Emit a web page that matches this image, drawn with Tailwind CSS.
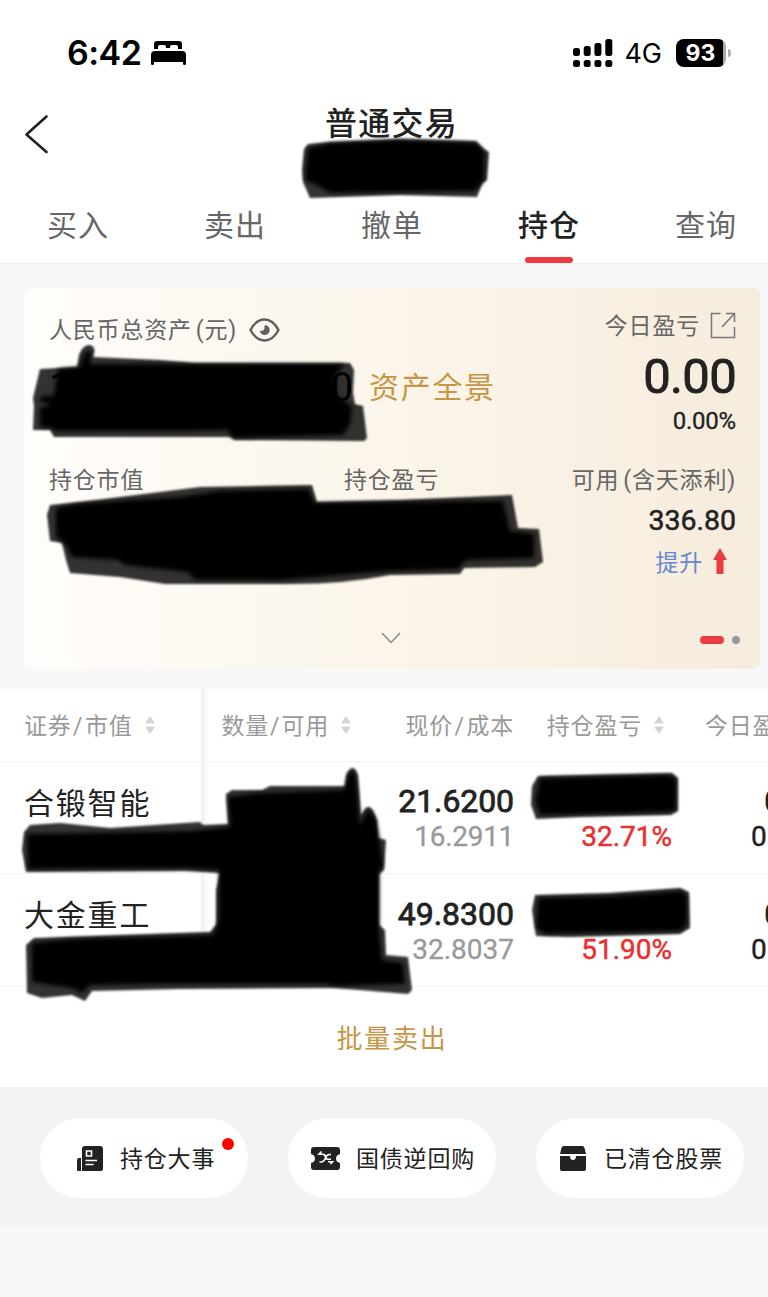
<!DOCTYPE html>
<html lang="zh-CN">
<head>
  <meta charset="UTF-8">
  <meta name="viewport" content="width=device-width, initial-scale=1.0">
  <title>普通交易</title>
  <script src="https://cdn.jsdelivr.net/npm/@tailwindcss/browser@4"></script>
</head>
<body class="bg-[#f8f8f8]">
  <div class="relative w-[768px] h-[1297px] overflow-hidden bg-[#f8f8f8] text-[#222] font-['Roboto','Noto_Sans_CJK_SC',sans-serif] whitespace-nowrap">

    <!-- Status bar -->
    <div class="h-24 bg-white flex items-center justify-between pt-[9px] pl-[67px] pr-[37px] text-black font-['Inter',sans-serif]">
      <div class="flex items-center gap-[10px]">
        <span class="text-[34px] leading-10 tracking-[-0.500px] font-semibold">6:42</span>
        <svg class="w-[35px] h-6" viewBox="0 0 35 24">
          <path d="M3 8V3q0-3 3-3h22q3 0 3 3v5h-4V6q0-2-2-2h-4q-2 0-2 2v1h-4V6q0-2-2-2H9Q7 4 7 6v2z"/>
          <path d="M0 14q0-4 4-4h27q4 0 4 4v9q0 1-1.500 1T32 23v-2H3v2q0 1-1.500 1T0 23z"/>
        </svg>
      </div>
      <div class="flex items-center">
        <svg class="w-10 h-7" viewBox="0 0 40 28">
          <rect x="0" y="9" width="7" height="8" rx="2.500"/><rect x="0" y="21" width="7" height="7" rx="2.500"/>
          <rect x="10.700" y="7" width="7" height="10" rx="2.500"/><rect x="10.700" y="21" width="7" height="7" rx="2.500"/>
          <rect x="21.400" y="4" width="7" height="13" rx="2.500"/><rect x="21.400" y="21" width="7" height="7" rx="2.500"/>
          <rect x="32.300" y="0" width="7" height="17" rx="2.500"/><rect x="32.300" y="21" width="7" height="7" rx="2.500"/>
        </svg>
        <span class="ml-[11px] mr-[2px] pt-[2px] text-[27px] leading-8">4G</span>
        <div class="ml-3 w-[50px] h-7 rounded-[8px] bg-linear-to-r from-black from-95% to-[#aaa] to-95% flex items-center justify-center pr-px pt-px text-white text-[23px] font-bold">93</div>
        <div class="ml-[2px] w-[3px] h-2 rounded-r-full bg-[#b0b0b0]"></div>
      </div>
    </div>

    <!-- Title -->
    <div class="h-[94px] bg-white grid grid-cols-[1fr_auto_1fr] items-start">
      <svg class="w-6 h-10 ml-[25px] mt-[18px]" viewBox="0 0 24 40" fill="none" stroke="#222" stroke-width="2.600" stroke-linecap="round" stroke-linejoin="round"><path d="M21.500 2.500L1.500 20.500l20 17.500"/></svg>
      <h1 class="mt-[6px] pl-[15px] text-[32px] leading-[44px] tracking-[1.300px] font-medium">普通交易</h1>
    </div>

    <!-- Tabs -->
    <div class="h-[74px] bg-white border-b border-[#eee] flex justify-between pl-[47px] pr-[31px] text-[30px] leading-[44px] tracking-[1px] text-[#666]">
      <div class="pt-[14px]">买入</div>
      <div class="pt-[14px]">卖出</div>
      <div class="pt-[14px]">撤单</div>
      <div class="pt-[14px] flex flex-col items-center justify-between font-medium text-[#222]">持仓<span class="w-12 h-[6px] rounded-full bg-[#e93b40]"></span></div>
      <div class="pt-[14px]">查询</div>
    </div>

    <!-- Assets card -->
    <div class="mt-[24px] ml-6 mr-2 h-[381px] rounded-[8px] bg-linear-to-r from-[#fffdfb] via-[#fbf5ea] to-[#f6ecdc] pl-[25px] pr-6 text-[23px] tracking-[0.8px] text-[#666]">
      <div class="flex justify-between h-[177px]">
        <div>
          <div class="flex items-center pt-[27px] leading-8">
            人民币总资产<span class="ml-1">(元)</span>
            <svg class="ml-[12px] -mt-[3px] w-[31px] h-6" viewBox="0 0 31 24" fill="none" stroke="#5f5f5f" stroke-width="2.400"><path d="M1.500 12Q7 1.500 15.500 1.500T29.500 12Q24 22.500 15.500 22.500T1.500 12z"/><path fill="#5f5f5f" stroke="none" d="M16 7a5 5 0 1 1-5.300 5.500 3.200 3.200 0 0 0 4.700-3.700z"/></svg>
          </div>
          <div class="flex items-center mt-5 leading-[42px]">
            <span class="w-[305px] flex justify-between text-[40px] text-black"><span>1</span><span>0</span></span>
            <span class="ml-[15px] text-[30px] tracking-[1.700px] text-[#c69545]">资产全景</span>
          </div>
        </div>
        <div class="flex flex-col items-end">
          <div class="flex items-center pt-[23px] leading-8">今日盈亏
            <svg class="ml-[10px] -mt-[3px] w-[26px] h-[27px]" viewBox="0 0 26 27" fill="none" stroke="#777" stroke-width="1.500"><path d="M10.500 1.500H1.500v24h23V15M12 15L24 2M16 1.500h8.500V10"/></svg>
          </div>
          <div class="mt-[9px] text-[49px] leading-[50px] tracking-[-0.700px] text-[#222] [-webkit-text-stroke:0.900px_#222]">0.00</div>
          <div class="mt-[3px] text-[24px] leading-8 tracking-[-0.200px] text-[#222] [-webkit-text-stroke:0.300px_#222]">0.00%</div>
        </div>
      </div>
      <div class="grid grid-cols-[295px_1fr_auto] leading-8 h-[148px]">
        <div>持仓市值</div>
        <div>持仓盈亏</div>
        <div class="flex flex-col items-end">
          <div>可用<span class="ml-1">(含天添利)</span></div>
          <div class="mt-[8px] text-[28.500px] tracking-[0px] text-[#222] [-webkit-text-stroke:0.500px_#222]">336.80</div>
          <div class="mt-[11px] pr-[9px] flex items-center text-[#6688d0]">提升
            <svg class="ml-[10px] w-[14px] h-[26px] -mt-[6px]" viewBox="0 0 14 26" fill="#e93b40"><path d="M7 0l7 12h-3.500v14h-7V12H0z"/></svg>
          </div>
        </div>
      </div>
      <div class="grid grid-cols-3 items-center h-[50px] -mr-[24px]">
        <svg class="col-start-2 justify-self-center w-5 h-3 -ml-[28px]" viewBox="0 0 20 12" fill="none" stroke="#888" stroke-width="1.400"><path d="M1 1l9 9.500L19 1"/></svg>
        <div class="justify-self-end flex items-center gap-2 pr-5 pt-1">
          <span class="w-6 h-2 rounded-full bg-[#e93b40]"></span>
          <span class="w-2 h-2 rounded-full bg-[#999]"></span>
        </div>
      </div>
    </div>

    <!-- Holdings -->
    <div class="mt-5 h-[398px] bg-white">
      <div class="grid grid-cols-[201px_152px_161px_158px_150px] grid-rows-[73px] h-[73px] text-[23px] leading-[70px] tracking-[0.800px] text-[#999]">
        <div class="flex items-center h-[73px] pt-[3px] pl-[24px] border-b border-[#f4f4f4]">证券<span class="mx-[1.500px]">/</span>市值
          <svg class="ml-[12px] -mt-[3px] w-[10px] h-[18px]" viewBox="0 0 10 18" fill="#d4d4d4"><path d="M5 0l5 7.500H0zM0 10.500h10L5 18z"/></svg>
        </div>
        <div class="flex items-center justify-end h-[73px] pt-[3px] pr-[2px] border-b border-[#f4f4f4] bg-[linear-gradient(to_right,#f0f0f0,#ffffff_7px)]">数量<span class="mx-px">/</span>可用
          <svg class="ml-[12px] -mt-[3px] w-[10px] h-[18px]" viewBox="0 0 10 18" fill="#d4d4d4"><path d="M5 0l5 7.500H0zM0 10.500h10L5 18z"/></svg>
        </div>
        <div class="h-[73px] pt-[3px] text-right border-b border-[#f4f4f4]">现价<span class="mx-[1.500px]">/</span>成本</div>
        <div class="flex items-center justify-end h-[73px] pt-[3px] pr-[8px] border-b border-[#f4f4f4]">持仓盈亏
          <svg class="ml-[12px] -mt-[3px] w-[10px] h-[18px]" viewBox="0 0 10 18" fill="#d4d4d4"><path d="M5 0l5 7.500H0zM0 10.500h10L5 18z"/></svg>
        </div>
        <div class="h-[73px] pt-[3px] pl-[33px] border-b border-[#f4f4f4]">今日盈亏</div>
      </div>

      <div class="grid grid-cols-[201px_152px_161px_158px_150px] h-[112px]">
        <div class="pl-[24px] pt-[20px] text-[30px] leading-[44px] tracking-[1.800px] border-b border-[#f4f4f4]">合锻智能</div>
        <div class="border-b border-[#f4f4f4] bg-[linear-gradient(to_right,#f0f0f0,#ffffff_7px)]"></div>
        <div class="border-b border-[#f4f4f4] pt-[21px] text-right">
          <div class="text-[32px] leading-9 tracking-[-0.100px] [-webkit-text-stroke:0.800px_#222]">21.6200</div>
          <div class="text-[28px] leading-9 tracking-[-0.300px] text-[#999] [-webkit-text-stroke:0.300px_#999]">16.2911</div>
        </div>
        <div class="border-b border-[#f4f4f4] pt-[57px] text-right text-[28px] leading-9 tracking-[0px] text-[#eb2f2f] [-webkit-text-stroke:0.500px_#eb2f2f]">32.71%</div>
        <div class="border-b border-[#f4f4f4] pt-[21px]">
          <div class="pl-[92px] text-[32px] leading-9 font-medium">0.00</div>
          <div class="pl-[79px] text-[28px] leading-9 [-webkit-text-stroke:0.400px_#222]">0.00%</div>
        </div>
      </div>

      <div class="grid grid-cols-[201px_152px_161px_158px_150px] h-[113px]">
        <div class="pl-[24px] pt-[20px] text-[30px] leading-[44px] tracking-[1.800px] border-b border-[#f4f4f4]">大金重工</div>
        <div class="border-b border-[#f4f4f4] bg-[linear-gradient(to_right,#f0f0f0,#ffffff_7px)]"></div>
        <div class="border-b border-[#f4f4f4] pt-[22px] text-right">
          <div class="text-[32px] leading-9 tracking-[0px] [-webkit-text-stroke:0.800px_#222]">49.8300</div>
          <div class="text-[28px] leading-9 tracking-[0px] text-[#999] [-webkit-text-stroke:0.300px_#999]">32.8037</div>
        </div>
        <div class="border-b border-[#f4f4f4] pt-[58px] text-right text-[28px] leading-9 tracking-[0px] text-[#eb2f2f] [-webkit-text-stroke:0.500px_#eb2f2f]">51.90%</div>
        <div class="border-b border-[#f4f4f4] pt-[22px]">
          <div class="pl-[92px] text-[32px] leading-9 font-medium">0.00</div>
          <div class="pl-[79px] text-[28px] leading-9 [-webkit-text-stroke:0.400px_#222]">0.00%</div>
        </div>
      </div>

      <div class="h-[100px] flex items-center justify-center pt-1 pl-[16px] text-[26px] tracking-[1.700px] text-[#c69545]">批量卖出</div>
    </div>

    <!-- Shortcuts -->
    <div class="h-[141px] bg-[#f3f3f3] flex items-center gap-10 pl-10 text-[23px] tracking-[0.800px]">
      <div class="relative shrink-0 w-52 h-20 rounded-full bg-white flex items-center pl-[37px]">
        <svg class="w-[26px] h-[26px] mt-[2px]" viewBox="0 0 26 26"><path fill="#222" d="M8 0h15q3 0 3 3v20q0 2-2 2H5V3q0-3 3-3zM0 14q0-2 2-2h2v13H1q-1 0-1-1z"/><path fill="none" stroke="#fff" stroke-width="1.600" d="M9.500 5h5v5h-5zM8.500 14.500h11.500M8.500 18.500h8"/></svg>
        <span class="ml-[17px] pt-[6px]">持仓大事</span>
        <span class="absolute left-[182px] top-5 w-3 h-3 rounded-full bg-[#ff0000]"></span>
      </div>
      <div class="shrink-0 w-52 h-20 rounded-full bg-white flex items-center pl-[23px]">
        <svg class="w-[29px] h-[23px] mt-[2px]" viewBox="0 0 29 23"><path fill="#222" d="M3 0h23q3 0 3 3v4q-4 1-4 4.500t4 4.500v4q0 3-3 3H3q-3 0-3-3v-4q4-1 4-4.500T0 7V3q0-3 3-3z"/><path fill="none" stroke="#fff" stroke-width="1.600" d="M10.500 4.500L8 7.200h4q2 0 2.300 2.500t2.500 2.500H20M20 7.500h-2q-2.500.5-3.500 3.500T11 15H8.500M17 14.800h4.500L19.500 17"/></svg>
        <span class="ml-4 pt-[6px]">国债逆回购</span>
      </div>
      <div class="shrink-0 w-52 h-20 rounded-full bg-white flex items-center pl-6">
        <svg class="w-[26px] h-[25px] mt-[2px]" viewBox="0 0 26 25" fill="#222"><path d="M4 0h18q2 0 2.500 2L26 8H0l1.500-6Q2 0 4 0zM0 10h10q0 4 3 4t3-4h10v13q0 2-2 2H2q-2 0-2-2z"/></svg>
        <span class="ml-[18px] pt-[6px]">已清仓股票</span>
      </div>
    </div>

    <!-- Marker strokes hiding account numbers -->
    <svg class="absolute inset-0 w-[768px] h-[1297px] pointer-events-none" viewBox="0 0 768 1297">
      <defs>
        <filter id="soft" x="-5%" y="-5%" width="110%" height="110%"><feGaussianBlur stdDeviation="1.300"/></filter>
        <filter id="core" x="-5%" y="-5%" width="110%" height="110%"><feGaussianBlur stdDeviation="2"/></filter>
      </defs>
      <g filter="url(#soft)" fill="#000" fill-opacity="0.800">
        <path d="M308 144L330 142L400 139L476 141L484 149L489 152L487 180L482 184L477 197L400 195L310 198L303 182L302 170L304 149z"/>
        <path d="M40 369L77 367L79 355Q83 344 90 345Q97 347 93 357L160 360L195 363L350 363L354 370L353 393L355 404L363 406L367 438L364 441L235 440L230 437L54 437L50 430L33 430L34 406L33 398z"/>
        <path d="M50 505L80 502L200 487L312 485L317 502L400 500L512 495L518 528L539 529L543 562L535 567L464 568L460 574L390 575Q340 585 280 584L165 584L120 577L70 573L66 560L62 543L50 541L47 515z"/>
        <path d="M30 825L60 823L110 828L200 822L203 825L228 824L226 794L232 790L262 790L270 786L345 786L346 775Q353 761 358 775L361 815Q370 797 377 820L378 838L386 840L384 870L379 874L379 925L385 930L386 955L408 957L412 990L408 994L335 988L180 989L92 991L85 1001L72 995L42 998L27 993L26 945L34 938L210 932L216 925L216 890L220 873L186 871L26 872L22 850L24 832z"/>
        <path d="M538 776L672 773L678 778L678 811L671 815L580 817L536 819L531 805L532 786z"/>
        <path d="M535 895L610 893L680 888L689 892L690 928L680 934L570 937L536 936L532 910z"/>
      </g>
      <g filter="url(#core)" fill="#000">
        <path d="M308 148L330 143L400 140L476 143L485 152L484 180L475 191L400 192L330 193L318 186L305 180z"/>
        <path d="M58 369L80 367Q84 349 91 351L90 364L345 364L335 376L337 396L352 406L350 424L343 435L232 438L228 430L184 431L55 431L52 428L40 427L40 408L52 404L40 402L40 397L54 395z"/>
        <path d="M56 508L76 504L180 497L220 491L309 489L314 503L400 502L503 501L510 531L534 534L534 558L466 560L458 569L390 571L280 580H195L188 572L125 565L118 560L72 557L66 545L56 536z"/>
        <path d="M27 834L190 831L230 827L228 797L258 793L344 790L348 776Q353 764 356 778L360 826L368 808L376 820L380 842L383 866L379 872L379 930L382 960L403 963L405 984L335 986L325 984L200 984L160 984L90 985L82 993L72 988L32 982L32 943L70 939L213 935L219 920L219 870L186 868L28 869z"/>
        <path d="M540 778L670 775L676 779L676 810L667 812L540 815L535 800z"/>
        <path d="M538 898L610 896L682 891L687 896L687 925L680 931L545 934L536 928z"/>
      </g>
    </svg>
  </div>
</body>
</html>
